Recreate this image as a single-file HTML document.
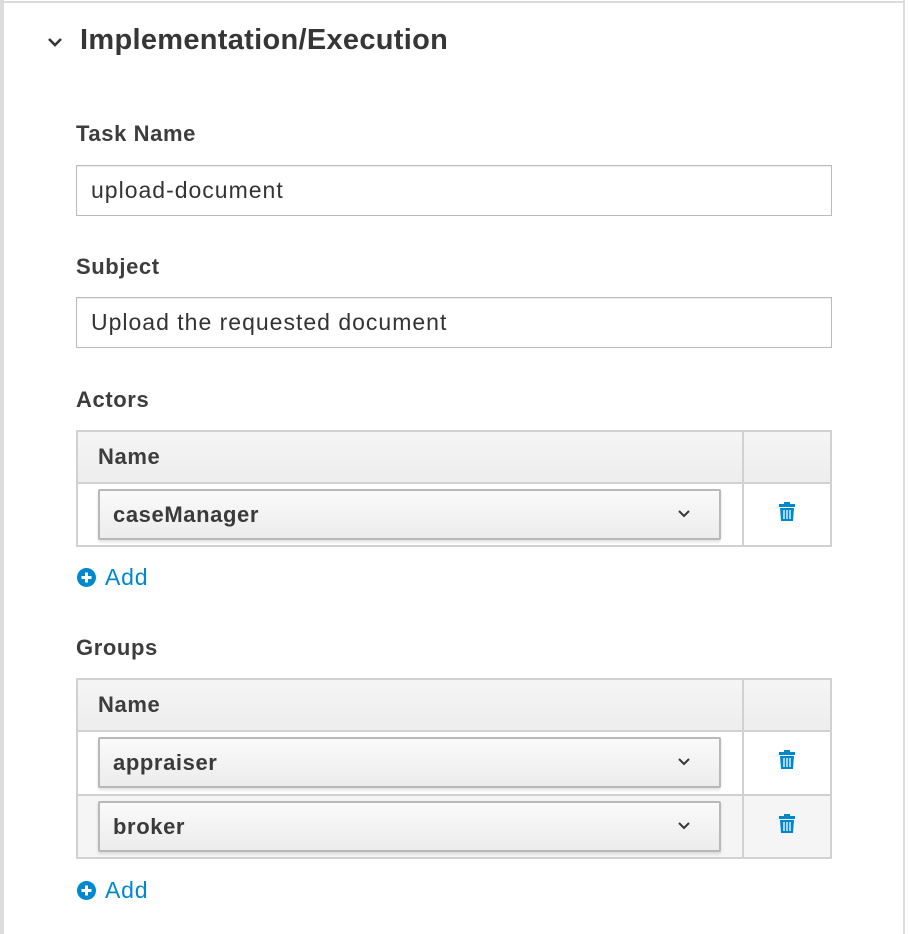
<!DOCTYPE html>
<html><head><style>
*{margin:0;padding:0;box-sizing:border-box}
body{width:908px;height:934px;background:#fff;position:relative;overflow:hidden;font-family:"Liberation Sans",sans-serif;color:#363636}
.a{position:absolute}
.lbl{position:absolute;left:76px;font-size:22px;font-weight:bold;color:#3d3d3d;letter-spacing:0.6px}
.inp{position:absolute;left:76px;width:756px;height:51px;border:1px solid #bbb;box-shadow:inset 0 1px 1px rgba(0,0,0,.08);font-size:23px;padding-left:14px;line-height:49px;color:#333;letter-spacing:1px}
.tbl{position:absolute;left:76px;width:756px;border:2px solid #d1d1d1}
.row{position:relative;border-top:2px solid #d1d1d1}
.row:first-child{border-top:0}
.hd{height:50px;background:linear-gradient(#f5f5f5,#ededed);font-size:22px;font-weight:bold;line-height:50px;padding-left:20px;color:#3d3d3d;letter-spacing:0.6px}
.div{position:absolute;left:664px;top:0;bottom:0;width:2px;background:#d1d1d1}
.sel{position:absolute;left:20px;top:5px;width:623px;height:51px;border:2px solid #b8b8b8;border-radius:2px;background:linear-gradient(#fafafa,#ececec);box-shadow:0 2px 3px rgba(0,0,0,.12);font-size:22px;font-weight:bold;line-height:47px;padding-left:13px;color:#3a3a3a;letter-spacing:0.6px}
.sel svg{position:absolute;right:28px;top:18px}
.tr{position:absolute;left:700px;top:17px}
.add{position:absolute;left:77px;font-size:23px;color:#0088ce;letter-spacing:0.8px}
.add svg{vertical-align:-2px;margin-right:9px}
</style></head><body>
<div class="a" style="left:0;top:0;width:4px;height:934px;background:#dcdcdc"></div>
<div class="a" style="left:0;top:1px;width:905px;height:2px;background:#dcdcdc"></div>
<div class="a" style="left:903px;top:0;width:2px;height:934px;background:#dcdcdc"></div>
<svg class="a" style="left:47px;top:37px" width="16" height="10" viewBox="0 0 16 10"><path d="M2 2l6 6 6-6" stroke="#363636" stroke-width="2.6" fill="none"/></svg>
<div class="a" style="left:80px;top:24px;font-size:29px;font-weight:bold;color:#363636;letter-spacing:0.3px">Implementation/Execution</div>
<div class="lbl" style="top:121px">Task Name</div>
<div class="inp" style="top:165px">upload-document</div>
<div class="lbl" style="top:254px">Subject</div>
<div class="inp" style="top:297px">Upload the requested document</div>
<div class="lbl" style="top:387px">Actors</div>
<div class="tbl" style="top:430px">
<div class="row hd">Name<div class="div"></div></div>
<div class="row" style="height:63px"><div class="div"></div><div class="sel">caseManager<svg width="14" height="9" viewBox="0 0 14 9"><path d="M2 2l5 5 5-5" stroke="#363636" stroke-width="2" fill="none"/></svg></div>
<svg class="tr" width="18" height="21" viewBox="0 0 18 21"><path d="M6 1h6v2h5v3H1V3h5z" fill="#0088ce"/><path d="M2 7h14l-1 13H3z" fill="#0088ce"/><path d="M6 9v9M9 9v9M12 9v9" stroke="#fff" stroke-width="1.3"/></svg></div>
</div>
<div class="add" style="top:564px"><svg width="19" height="19" viewBox="0 0 19 19"><circle cx="9.5" cy="9.5" r="9.5" fill="#0088ce"/><path d="M9.5 4.5v10M4.5 9.5h10" stroke="#fff" stroke-width="3"/></svg>Add</div>
<div class="lbl" style="top:635px">Groups</div>
<div class="tbl" style="top:678px">
<div class="row hd">Name<div class="div"></div></div>
<div class="row" style="height:64px"><div class="div"></div><div class="sel">appraiser<svg width="14" height="9" viewBox="0 0 14 9"><path d="M2 2l5 5 5-5" stroke="#363636" stroke-width="2" fill="none"/></svg></div>
<svg class="tr" width="18" height="21" viewBox="0 0 18 21"><path d="M6 1h6v2h5v3H1V3h5z" fill="#0088ce"/><path d="M2 7h14l-1 13H3z" fill="#0088ce"/><path d="M6 9v9M9 9v9M12 9v9" stroke="#fff" stroke-width="1.3"/></svg></div>
<div class="row" style="height:63px;background:#f5f5f5"><div class="div"></div><div class="sel">broker<svg width="14" height="9" viewBox="0 0 14 9"><path d="M2 2l5 5 5-5" stroke="#363636" stroke-width="2" fill="none"/></svg></div>
<svg class="tr" width="18" height="21" viewBox="0 0 18 21"><path d="M6 1h6v2h5v3H1V3h5z" fill="#0088ce"/><path d="M2 7h14l-1 13H3z" fill="#0088ce"/><path d="M6 9v9M9 9v9M12 9v9" stroke="#fff" stroke-width="1.3"/></svg></div>
</div>
<div class="add" style="top:877px"><svg width="19" height="19" viewBox="0 0 19 19"><circle cx="9.5" cy="9.5" r="9.5" fill="#0088ce"/><path d="M9.5 4.5v10M4.5 9.5h10" stroke="#fff" stroke-width="3"/></svg>Add</div>
</body></html>
